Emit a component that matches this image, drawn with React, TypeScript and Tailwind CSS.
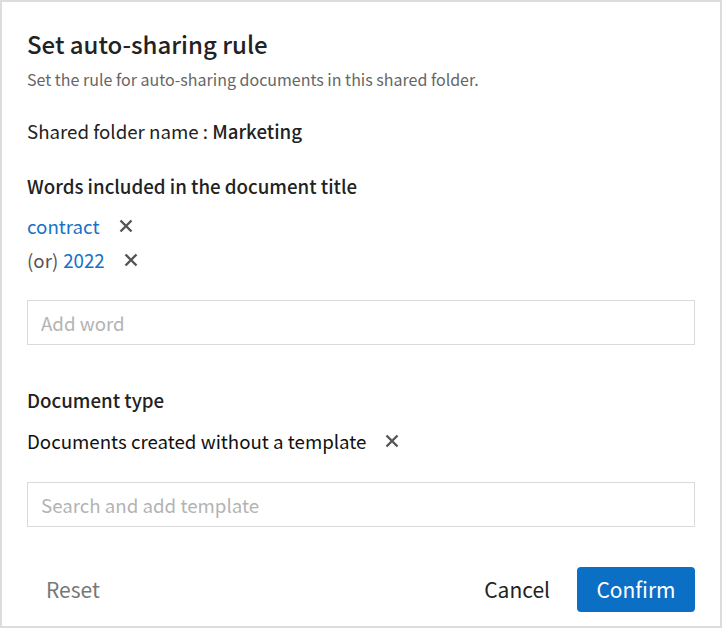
import React, { useState } from 'react';

const font = { fontFamily: '"Noto Sans CJK KR", "Noto Sans", sans-serif' };

const XIcon: React.FC<{ onClick?: () => void }> = ({ onClick }) => (
  <button onClick={onClick} className="ml-[18px] flex h-[16px] w-[16px] items-center justify-center">
    <svg width="14" height="14" viewBox="0 0 14 14" fill="none">
      <path d="M1.5 1.5L12.5 12.5M12.5 1.5L1.5 12.5" stroke="#555" strokeWidth="2.4" />
    </svg>
  </button>
);

const App: React.FC = () => {
  const [words, setWords] = useState<string[]>(['contract', '2022']);
  const [word, setWord] = useState('');
  const [template, setTemplate] = useState('');

  return (
    <div style={font} className="h-[629px] w-[722px] bg-white">
      <div className="h-[628px] w-[722px] border-2 border-[#dcdcdc] px-[25px] pt-[26px] text-[#222]">
        <h2 className="text-[24px] font-medium leading-[32px] text-[#222]">Set auto-sharing rule</h2>
        <p className="mt-[8px] text-[16px] leading-[22px] text-[#666]">
          Set the rule for auto-sharing documents in this shared folder.
        </p>

        <p className="mt-[28px] text-[18.7px] leading-[26px]">
          Shared folder name : <span className="font-medium">Marketing</span>
        </p>

        <h3 className="mt-[29px] text-[18.7px] font-medium leading-[26px]">Words included in the document title</h3>
        <div className="mt-[14px] flex flex-col gap-[8px]">
          {words.map((w, i) => (
            <div key={w} className="flex items-center text-[18.7px] leading-[26px]">
              {i > 0 && <span className="mr-[5px] text-[#555]">(or)</span>}
              <span className="text-[#1672c6]">{w}</span>
              <XIcon onClick={() => setWords(words.filter(x => x !== w))} />
            </div>
          ))}
        </div>
        <input
          value={word}
          onChange={e => setWord(e.target.value)}
          placeholder="Add word"
          className="mt-[27px] h-[45px] w-[668px] border border-[#dadada] px-[13px] text-[18.7px] outline-none placeholder:text-[#b3b3b3]"
        />

        <h3 className="mt-[42px] text-[18.7px] font-medium leading-[26px]">Document type</h3>
        <div className="mt-[15px] flex items-center text-[18.7px] leading-[26px] text-[#111]">
          <span>Documents created without a template</span>
          <XIcon />
        </div>
        <input
          value={template}
          onChange={e => setTemplate(e.target.value)}
          placeholder="Search and add template"
          className="mt-[28px] h-[45px] w-[668px] border border-[#dadada] px-[13px] text-[18.7px] outline-none placeholder:text-[#b3b3b3]"
        />

        <div className="mt-[40px] flex items-center justify-between">
          <button className="h-[45px] px-[19px] text-[21px] text-[#777]">Reset</button>
          <div className="flex items-center">
            <button className="h-[45px] px-[6px] text-[21px] text-[#222]">Cancel</button>
            <button className="ml-[21px] h-[45px] w-[118px] rounded-[4px] bg-[#0b6fc5] text-[21px] text-white">
              Confirm
            </button>
          </div>
        </div>
      </div>
    </div>
  );
};

export default App;
